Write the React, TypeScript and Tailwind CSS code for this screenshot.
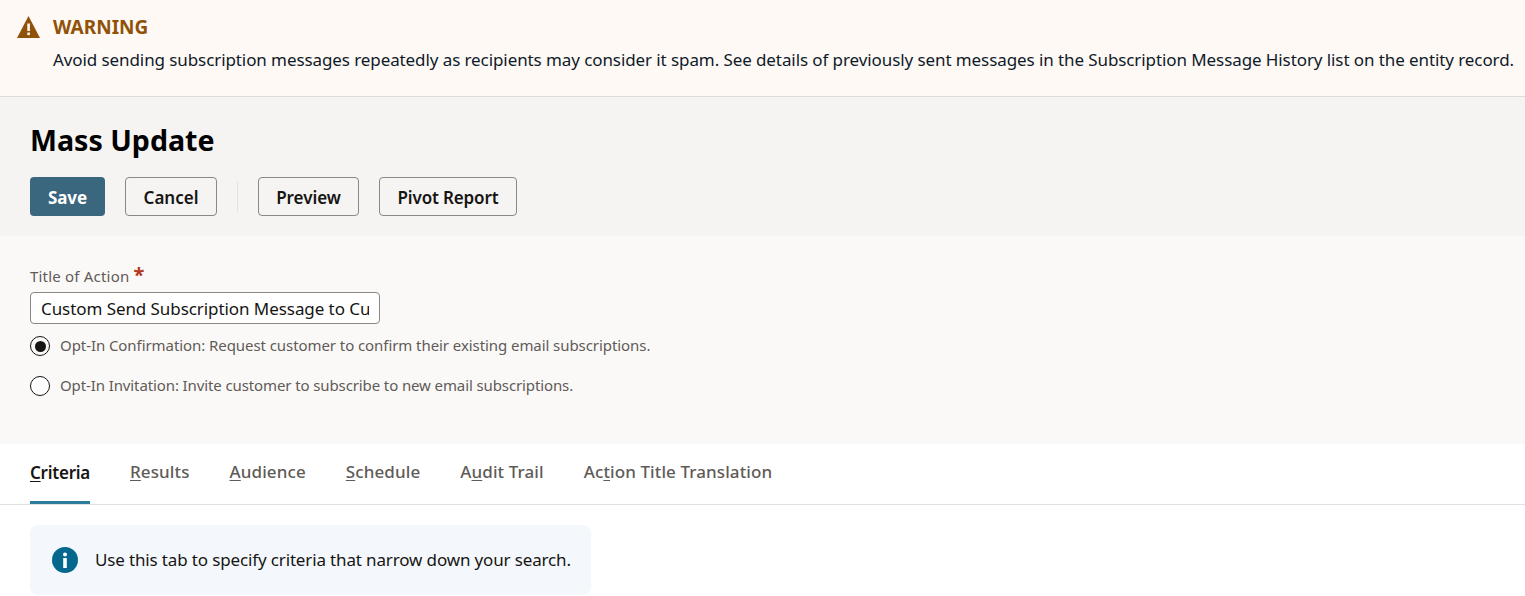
export default function App() {
  const tabs = [
    { pre: "", u: "C", post: "riteria", active: true },
    { pre: "", u: "R", post: "esults" },
    { pre: "", u: "A", post: "udience" },
    { pre: "", u: "S", post: "chedule" },
    { pre: "A", u: "u", post: "dit Trail" },
    { pre: "Ac", u: "t", post: "ion Title Translation" },
  ];
  return (
    <div className="h-[596px] overflow-hidden bg-white font-['Noto_Sans',sans-serif] text-[#161513]">
      <div className="flex h-[97px] border-b border-[#dfdcd8] bg-[#fef9f4] pl-[17px] pt-[15px]">
        <svg width="23" height="24" viewBox="0 0 23 24" className="shrink-0">
          <path d="M11.5 1 L23 23 H0 Z" fill="#8f5208" />
          <rect x="10.3" y="8.5" width="2.6" height="7.5" fill="#fef9f4" />
          <rect x="10.3" y="17.5" width="2.6" height="2.6" fill="#fef9f4" />
        </svg>
        <div className="ml-[13px]">
          <div className="text-[19px] font-bold leading-6 text-[#8f5208]">WARNING</div>
          <div className="mt-[9px] whitespace-nowrap text-[17px] leading-6 tracking-[-0.09px] text-[#0f1a2a]">
            Avoid sending subscription messages repeatedly as recipients may consider it spam. See details of previously sent messages in the Subscription Message History list on the entity record.
          </div>
        </div>
      </div>
      <div className="h-[139px] bg-[#f5f4f2] px-[30px] pt-[25px]">
        <h1 className="text-[28.6px] font-bold leading-9 text-black">Mass Update</h1>
        <div className="mt-[19px] flex items-center">
          <button className="h-[39px] w-[75px] rounded-[4px] bg-[#3b677e] pt-[2px] text-[17px] font-bold tracking-[-0.1px] text-white">Save</button>
          <button className="ml-5 h-[39px] w-[92px] rounded-[4px] border border-[#8a8784] pt-[2px] text-[17px] font-semibold">Cancel</button>
          <div className="ml-5 h-[30px] w-px bg-[#e4e2df]" />
          <button className="ml-5 h-[39px] w-[101px] rounded-[4px] border border-[#8a8784] pt-[2px] text-[17px] font-semibold tracking-[-0.05px]">Preview</button>
          <button className="ml-5 h-[39px] w-[138px] rounded-[4px] border border-[#8a8784] pt-[2px] text-[17px] font-semibold tracking-[-0.15px]">Pivot Report</button>
        </div>
      </div>
      <div className="h-[208px] bg-[#fbf9f8] px-[30px] pt-[28px]">
        <div className="flex h-[24px] items-center text-[15px] leading-6 tracking-[0.2px] text-[#5f5b57]">
          Title of Action<span className="ml-[4px] -translate-y-[1px] text-[20px] font-bold leading-4 text-[#b23a1e]">*</span>
        </div>
        <input
          readOnly
          value="Custom Send Subscription Message to Customers"
          className="mt-[4px] block h-[32px] w-[350px] rounded-[4px] border border-[#8a8784] bg-white px-[10px] pt-[1px] text-[17px] tracking-[-0.07px] text-[#161513] outline-none"
        />
        <div className="mt-[8px] flex h-[28px] items-center text-[15px] tracking-[-0.07px] text-[#5f5b57]">
          <span className="flex h-5 w-5 items-center justify-center rounded-full border-[1.5px] border-[#161513]">
            <span className="h-[11px] w-[11px] rounded-full bg-[#161513]" />
          </span>
          <span className="ml-[10px] -translate-y-[1px]">Opt-In Confirmation: Request customer to confirm their existing email subscriptions.</span>
        </div>
        <div className="mt-[12px] flex h-[28px] items-center text-[15px] tracking-[-0.11px] text-[#5f5b57]">
          <span className="h-5 w-5 rounded-full border border-[#161513] bg-white" />
          <span className="ml-[10px] -translate-y-[1px]">Opt-In Invitation: Invite customer to subscribe to new email subscriptions.</span>
        </div>
      </div>
      <div className="flex h-[61px] gap-10 border-b border-[#e3e1de] px-[30px]">
        {tabs.map((t) => (
          <div
            key={t.post}
            className={
              t.active
                ? "flex h-[60px] w-[60px] items-center justify-center whitespace-nowrap border-b-[3px] border-[#2b7d9b] text-[17px] font-semibold tracking-[-0.25px] text-[#161513]"
                : "flex h-[60px] items-center pb-[4px] text-[17px] font-medium tracking-[0.1px] text-[#5f5b57]"
            }
          >
            <span>
              {t.pre}
              <span className="underline underline-offset-2">{t.u}</span>
              {t.post}
            </span>
          </div>
        ))}
      </div>
      <div className="ml-[30px] mt-[20px] flex h-[70px] w-[561px] items-center rounded-lg bg-[#f4f8fc] pl-[22px]">
        <svg width="26" height="26" viewBox="0 0 26 26" className="shrink-0">
          <circle cx="13" cy="13" r="13" fill="#04688e" />
          <circle cx="13" cy="7.5" r="2" fill="#fff" />
          <rect x="11.2" y="11" width="3.6" height="10" fill="#fff" />
        </svg>
        <span className="ml-[17px] text-[17px] tracking-[-0.145px] text-[#161513]">Use this tab to specify criteria that narrow down your search.</span>
      </div>
    </div>
  );
}
